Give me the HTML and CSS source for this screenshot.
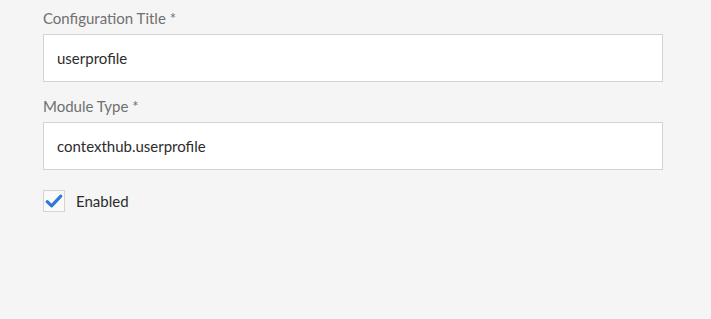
FILE: index.html
```html
<!DOCTYPE html>
<html>
<head>
<meta charset="utf-8">
<link rel="stylesheet" href="styles.css">
</head>
<body>
<form class="form">
  <div class="field">
    <label class="field-label">Configuration Title *</label>
    <div class="text-input">userprofile</div>
  </div>
  <div class="field">
    <label class="field-label">Module Type *</label>
    <div class="text-input">contexthub.userprofile</div>
  </div>
  <div class="check-row">
    <span class="checkbox">
      <svg width="20" height="20" viewBox="0 0 20 20"><path d="M3.2 10.6 L7.6 14.8 L16.8 5.2" fill="none" stroke="#2c7bd6" stroke-width="3.2" stroke-linecap="round" stroke-linejoin="round"/></svg>
    </span>
    <span class="check-label">Enabled</span>
  </div>
</form>
</body>
</html>
```

FILE: styles.css
```css
html, body {
  margin: 0;
  padding: 0;
  background: #f5f5f5;
  height: 100%;
}
body {
  font-family: Lato, "Liberation Sans", sans-serif;
  font-size: 15px;
  color: #323232;
}
.form {
  padding: 8px 0 0 43px;
  width: 620px;
  display: flex;
  flex-direction: column;
}
.field {
  display: flex;
  flex-direction: column;
  gap: 6px;
  margin-bottom: 14px;
}
.field-label {
  line-height: 20px;
  color: #707070;
  font-size: 15px;
}
.text-input {
  box-sizing: border-box;
  height: 48px;
  border: 1px solid #d3d3d3;
  background: #fff;
  padding: 0 13px;
  display: flex;
  align-items: center;
  font-size: 15px;
  color: #2c2c2c;
}
.check-row {
  margin-top: 6px;
  display: flex;
  align-items: center;
  gap: 11px;
}
.checkbox {
  box-sizing: border-box;
  width: 22px;
  height: 22px;
  border: 1px solid #d3d3d3;
  background: #fafafa;
  display: flex;
  align-items: center;
  justify-content: center;
}
.check-label {
  font-size: 15px;
  color: #2c2c2c;
}
```
